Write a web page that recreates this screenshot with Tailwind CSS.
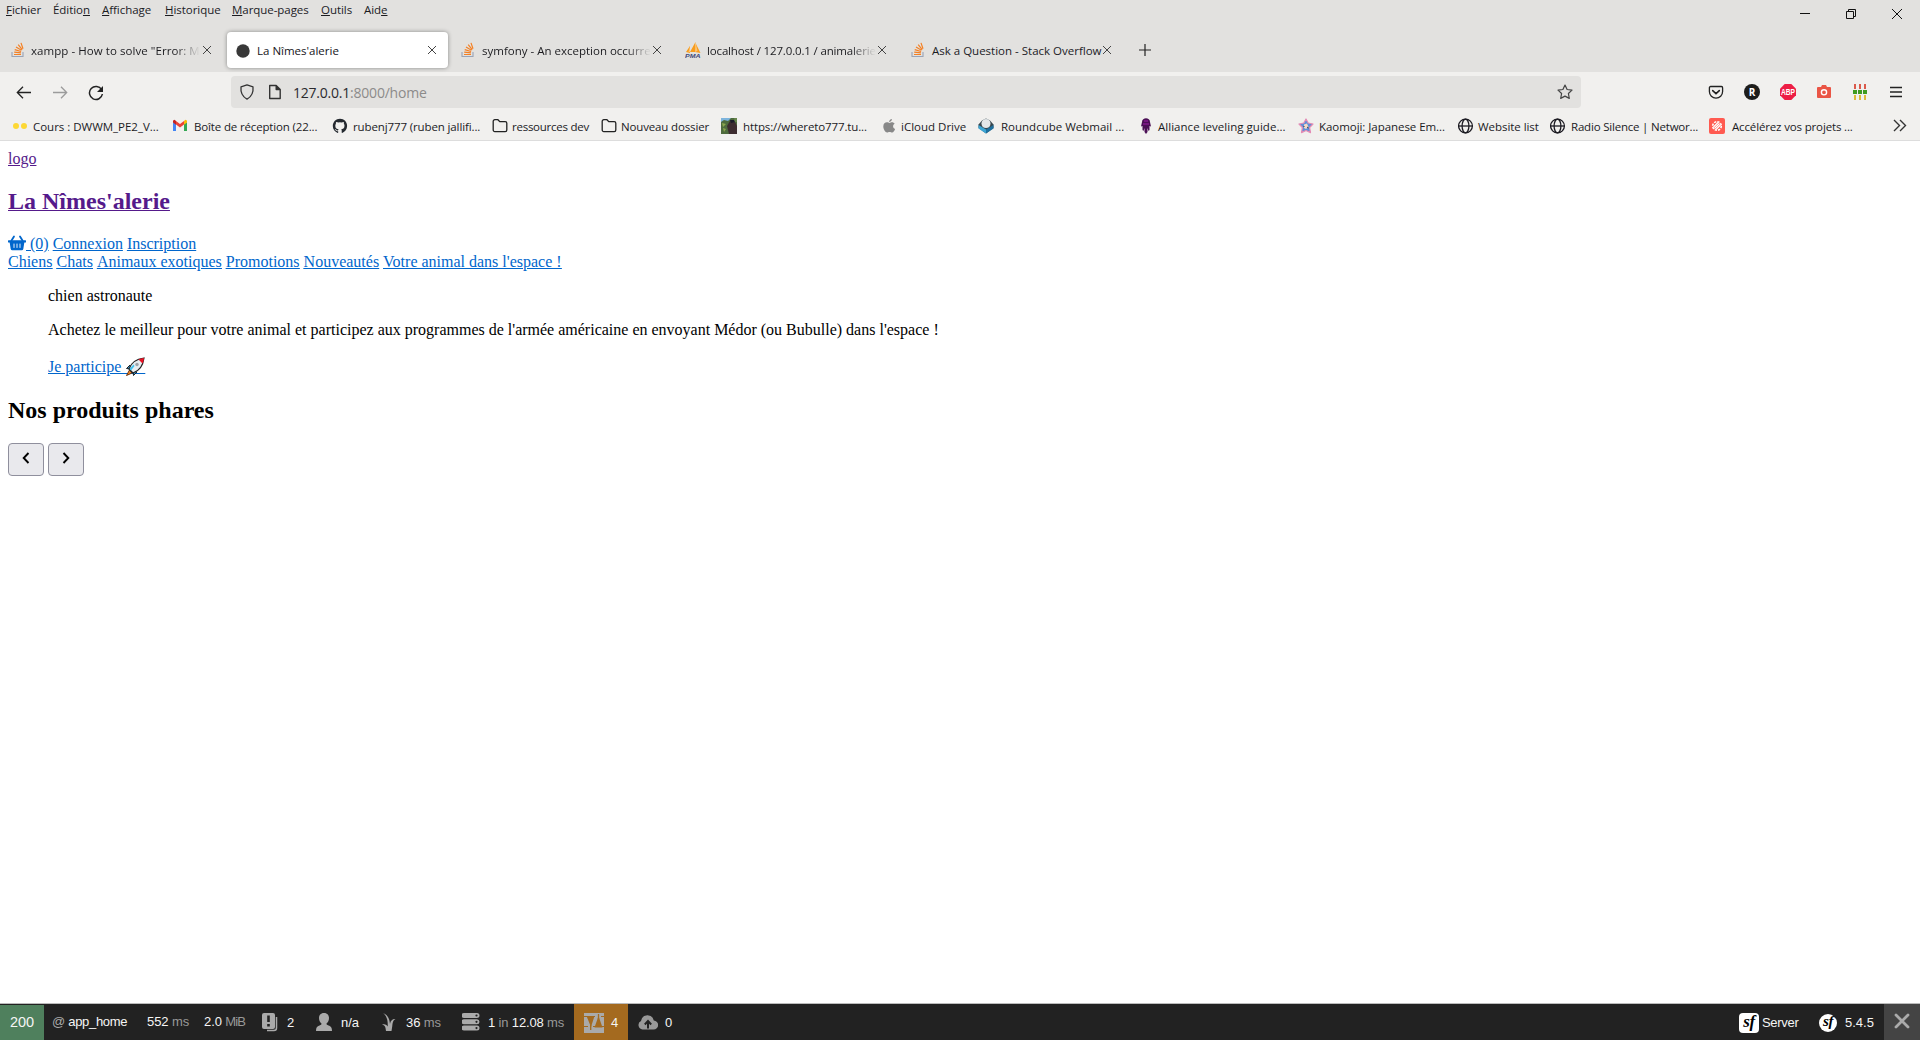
<!DOCTYPE html>
<html lang="fr">
  <head>
    <meta charset="UTF-8" />
    <meta name="viewport" content="width=device-width, initial-scale=1.0" />
    <script src="https://cdn.jsdelivr.net/npm/@tailwindcss/browser@4"></script>
    <title>La Nîmes'alerie</title>
  </head>
  <body class="bg-white h-[1040px] flex flex-col overflow-hidden">
    <!-- shared icons -->
    <svg class="hidden">
      <symbol id="so" viewBox="0 0 16 16">
        <path d="M2 10v4.500h11V10" fill="none" stroke="#9aa3b5" stroke-width="1.1" />
        <path d="M4 12.500h7M4.200 10.200l6.800.7M4.700 7.700l6.400 1.800M6 5l5.500 3.300M8.200 2.700l4 4.900M11 .9l2 5.900" stroke="#f48024" stroke-width="1.2" />
      </symbol>
      <symbol id="close" viewBox="0 0 10 10">
        <path d="M1 1l8 8M9 1l-8 8" stroke="#444" stroke-width="1" />
      </symbol>
      <symbol id="folder" viewBox="0 0 16 16">
        <path d="M1.2 12V3.3a1.6 1.6 0 0 1 1.6-1.6h3.1l1.9 2h5.4a1.6 1.6 0 0 1 1.6 1.6V12a1.6 1.6 0 0 1-1.6 1.6H2.8A1.6 1.6 0 0 1 1.2 12z" fill="none" stroke="#222" stroke-width="1.3" />
      </symbol>
      <symbol id="globe" viewBox="0 0 16 16">
        <g fill="none" stroke="#1c1b22" stroke-width="1.3">
          <circle cx="7.500" cy="8" r="6.9" />
          <ellipse cx="7.500" cy="8" rx="3.4" ry="6.9" />
          <path d="M.7 8h13.6" />
        </g>
      </symbol>
    </svg>

    <header class="font-['Open_Sans',sans-serif] text-[11.5px] text-[#1b1b1f] shrink-0">
      <div class="h-[72px] bg-[#e2e1df]">
        <!-- menu bar -->
        <div class="h-7 flex justify-between">
          <nav class="flex pl-1.5 leading-[20px] whitespace-nowrap tracking-[-0.05px]">
            <span class="w-[47px]"><u>F</u>ichier</span>
            <span class="w-[49px]">Éditio<u>n</u></span>
            <span class="w-[63px]"><u>A</u>ffichage</span>
            <span class="w-[67px]"><u>H</u>istorique</span>
            <span class="w-[89px]"><u>M</u>arque-pages</span>
            <span class="w-[43px]"><u>O</u>utils</span>
            <span>Aid<u>e</u></span>
          </nav>
          <div class="flex w-[138px] h-7 items-center">
            <svg class="w-[46px] h-7" viewBox="0 0 46 28"><path d="M18 13.5h10" stroke="#111" /></svg>
            <svg class="w-[46px] h-7" viewBox="0 0 46 28"><path d="M18.500 11.500h7v7h-7zM20.500 11.500v-2h7v7h-2" fill="none" stroke="#111" /></svg>
            <svg class="w-[46px] h-7" viewBox="0 0 46 28"><path d="M18 9l10 10M28 9L18 19" stroke="#111" /></svg>
          </div>
        </div>
        <!-- tabs -->
        <div class="h-11 flex items-center pl-0.5 whitespace-nowrap [&_span]:pt-[2px]">
          <div class="w-[225px] h-9 flex items-center pl-[8px]">
            <svg class="w-4 h-4"><use href="#so" /></svg>
            <span class="w-[169px] ml-[5px] overflow-hidden mask-r-from-85% mask-r-to-100% tracking-[0.06px]">xampp - How to solve "Error: My</span>
            <svg class="w-[10px] h-[10px] ml-[2px]"><use href="#close" /></svg>
          </div>
          <div class="w-[221px] mr-1 h-9 flex items-center pl-[9px] bg-white rounded shadow-[0_0_4px_rgba(0,0,0,0.4)]">
            <svg class="w-[14px] h-[14px] mt-0.5" viewBox="0 0 14 14"><circle cx="7" cy="7" r="6.700" fill="#383838" /></svg>
            <span class="w-[170px] ml-[7px] text-[#15141a]">La Nîmes'alerie</span>
            <svg class="w-[10px] h-[10px]"><use href="#close" /></svg>
          </div>
          <div class="w-[225px] h-9 flex items-center pl-[8px]">
            <svg class="w-4 h-4"><use href="#so" /></svg>
            <span class="w-[169px] ml-[6px] overflow-hidden mask-r-from-85% mask-r-to-100%">symfony - An exception occurred</span>
            <svg class="w-[10px] h-[10px] ml-[1px]"><use href="#close" /></svg>
          </div>
          <div class="w-[225px] h-9 flex items-center pl-[8px]">
            <svg class="w-4 h-4" viewBox="0 0 16 16">
              <path d="M1 10L5 4v7zM5 10l5.500-10v10zM10 10l1-8 4.500 9z" fill="#f89c1c" />
              <path d="M3.500 10L5 4v6zM10 10l.5-10 2 9z" fill="#fbc476" />
              <text x="0" y="15.500" font-size="6" font-weight="900" font-style="italic" font-family="Liberation Sans" textLength="15.500" lengthAdjust="spacingAndGlyphs" fill="#444a78">PMA</text>
            </svg>
            <span class="w-[169px] ml-[6px] overflow-hidden mask-r-from-85% mask-r-to-100% tracking-[-0.15px]">localhost / 127.0.0.1 / animalerie |</span>
            <svg class="w-[10px] h-[10px] ml-[1px]"><use href="#close" /></svg>
          </div>
          <div class="w-[225px] h-9 flex items-center pl-[8px]">
            <svg class="w-4 h-4"><use href="#so" /></svg>
            <span class="w-[169px] ml-[6px]">Ask a Question - Stack Overflow</span>
            <svg class="w-[10px] h-[10px] ml-[1px]"><use href="#close" /></svg>
          </div>
          <svg class="w-3 h-3 ml-[12px]" viewBox="0 0 12 12"><path d="M6 0v12M0 6h12" stroke="#222" stroke-width="1.2" /></svg>
        </div>
      </div>

      <div class="h-[69px] bg-[#f1f0ee] border-b border-[#dddddd]">
        <!-- address bar -->
        <div class="h-[40px] flex items-center">
          <div class="w-[231px] flex items-center pl-4 gap-5 text-[#1b1b1f]">
            <svg class="w-4 h-4" viewBox="0 0 16 16"><path d="M15 8.500H1.500M7 2.700L1.300 8.500 7 14.200" fill="none" stroke="#222" stroke-width="1.3" /></svg>
            <svg class="w-4 h-4" viewBox="0 0 16 16"><path d="M1 8.500h13.500M9 2.700l5.700 5.800L9 14.200" fill="none" stroke="#9b9b9b" stroke-width="1.3" /></svg>
            <svg class="w-4 h-4 mt-px" viewBox="0 0 16 16"><path d="M13.600 4.700A6.500 6.500 0 1 0 14.400 9" fill="none" stroke="#222" stroke-width="1.500" /><path d="M15 1v6H9z" fill="#222" /></svg>
          </div>
          <div class="w-[1350px] h-8 rounded bg-[#e2e1df] flex items-center pl-2">
            <svg class="w-4 h-4" viewBox="0 0 16 16"><path d="M8 .9l6 2c.5 5-1 9.600-6 12.200C3 12.500 1.500 7.900 2 2.900z" fill="none" stroke="#333" stroke-width="1.3" stroke-linejoin="round" /></svg>
            <svg class="w-4 h-4 ml-3" viewBox="0 0 16 16"><path d="M2.700 1.500h6.500l4 4v9H2.700zM9.200 1.500v4h4" fill="none" stroke="#333" stroke-width="1.4" stroke-linejoin="round" /><path d="M9 1.500l4.500 4.500H9z" fill="#333" /></svg>
            <span class="ml-[10px] w-[1264px] text-[14px] tracking-[-0.22px] text-[#8c8b8a] leading-8 pt-0.5"><span class="text-[#2a2a2e]">127.0.0.1</span>:8000/home</span>
            <svg class="w-4 h-4" viewBox="0 0 16 16"><path d="M8 1l2.100 4.500 4.900.6-3.600 3.400.9 4.900L8 12.100l-4.300 2.300.9-4.900L1 6.100l4.900-.6z" fill="none" stroke="#444" stroke-width="1.2" stroke-linejoin="round" /></svg>
          </div>
          <div class="flex items-center gap-5 pl-[127px]">
            <svg class="w-4 h-4" viewBox="0 0 16 16"><path d="M2.600 2.500h10.800a1.200 1.200 0 0 1 1.200 1.200V7.500a6.600 6.600 0 0 1-13.200 0V3.700a1.200 1.200 0 0 1 1.200-1.200z" fill="none" stroke="#222" stroke-width="1.3" /><path d="M4.700 6.600L8 9.700l3.300-3.100" fill="none" stroke="#222" stroke-width="1.6" stroke-linecap="round" /></svg>
            <span class="w-4 h-4 rounded-full bg-[#1d1d1b] text-white text-[10px] font-bold leading-4 text-center">R</span>
            <svg class="w-4 h-4" viewBox="0 0 16 16"><path d="M4.700 0h6.600L16 4.700v6.600L11.300 16H4.700L0 11.300V4.700z" fill="#ed1e45" /><text x="1" y="11" font-size="8.500" font-weight="800" font-family="Liberation Sans" textLength="14" lengthAdjust="spacingAndGlyphs" fill="#fff">ABP</text></svg>
            <svg class="w-4 h-4" viewBox="0 0 16 16"><path d="M2 3h3l1-2h4l1 2h3a1 1 0 0 1 1 1v9a1 1 0 0 1-1 1H2a1 1 0 0 1-1-1V4a1 1 0 0 1 1-1z" fill="#ea5545" /><circle cx="8" cy="8.300" r="2.600" fill="none" stroke="#fff" stroke-width="1.400" /></svg>
            <svg class="w-4 h-4" viewBox="0 0 16 16"><path d="M3 0v5M8 0v5M13 0v5" stroke="#d94a3a" stroke-width="1.800" /><path d="M3 11v5M8 11v5M13 11v5" stroke="#dbb626" stroke-width="1.800" /><path d="M1 8h4M6 8h4M11 8h4" stroke="#3f9b21" stroke-width="4" /></svg>
            <svg class="w-4 h-4" viewBox="0 0 16 16"><path d="M2 3.500h12M2 8h12M2 12.500h12" stroke="#222" stroke-width="1.400" /></svg>
          </div>
        </div>
        <!-- bookmarks -->
        <div class="h-7 flex items-center pl-3 whitespace-nowrap [&_svg]:w-4 [&_svg]:h-4 [&_svg]:shrink-0 [&_span]:pt-[2px]">
          <div class="w-[160px] flex items-center gap-[5px]">
            <svg viewBox="0 0 16 16"><circle cx="4" cy="8" r="3" fill="#fdd835" /><circle cx="12" cy="8" r="3" fill="#fdd835" /></svg>
            <span class="tracking-[-0.02px]">Cours : DWWM_PE2_V...</span>
          </div>
          <div class="w-[160px] flex items-center gap-[6px]">
            <svg viewBox="0 0 16 16"><path d="M1 13V4l3 2v7z" fill="#4285f4" /><path d="M12 13V6l3-2v9z" fill="#34a853" /><path d="M4 6.500V3l4 3 4-3v3.500L8 9.500z" fill="#ea4335" /><path d="M1 4.500V3a1.300 1.300 0 0 1 2.200-.8L4 3v3.700z" fill="#c5221f" /><path d="M12 3l.8-.8A1.300 1.300 0 0 1 15 3v1.500l-3 2.200z" fill="#fbbc04" /></svg>
            <span class="tracking-[-0.15px]">Boîte de réception (22...</span>
          </div>
          <div class="w-[160px] flex items-center gap-[5px]">
            <svg viewBox="0 0 16 16"><path fill="#24292f" d="M8 .8C3.900.8.800 4 .800 8c0 3.200 2 5.900 4.900 6.900.4.100.5-.2.5-.4v-1.300c-2 .4-2.500-.9-2.500-.9-.3-.8-.8-1-.8-1-.7-.4 0-.4 0-.4.7 0 1.100.7 1.100.7.700 1.100 1.700.8 2.100.6.1-.5.3-.8.5-1-1.600-.2-3.300-.8-3.300-3.500 0-.8.3-1.400.7-1.900-.1-.2-.3-.9.1-1.900 0 0 .6-.2 2 .7a7 7 0 0 1 3.600 0c1.400-.9 2-.7 2-.7.4 1 .2 1.700.1 1.900.5.5.7 1.100.7 1.900 0 2.700-1.700 3.300-3.300 3.500.3.200.5.700.5 1.300v2c0 .2.1.5.5.4 2.900-1 4.900-3.700 4.900-6.900C15.200 4 12.100.8 8 .8z" /></svg>
            <span class="tracking-[-0.12px]">rubenj777 (ruben jallifi...</span>
          </div>
          <div class="w-[109px] flex items-center gap-1">
            <svg><use href="#folder" /></svg><span class="tracking-[-0.25px]">ressources dev</span>
          </div>
          <div class="w-[120px] flex items-center gap-1">
            <svg><use href="#folder" /></svg><span class="tracking-[-0.15px]">Nouveau dossier</span>
          </div>
          <div class="w-[160px] flex items-center gap-[6px]">
            <svg viewBox="0 0 16 16"><path d="M0 0h16v16H0z" fill="#4e6b3d" /><path d="M0 0h10l-3 3-4-1-3 2z" fill="#7db4dc" /><path d="M1 5l4 1-3 3zM2 10l3 1-2 3z" fill="#8aa84e" /><path d="M6 8l3-5 5 1 2 4v8H8z" fill="#3d2d30" /><path d="M9 2h4l1 2-4 1z" fill="#191c28" /><path d="M13 0h3v4h-2z" fill="#67864d" /></svg>
            <span class="tracking-[-0.12px]">https://whereto777.tu...</span>
          </div>
          <div class="w-[97px] flex items-center gap-1">
            <svg viewBox="0 0 16 16"><path fill="#888" d="M10.900 1c.1 1.600-1.300 3-2.800 3C8 2.500 9.400 1.200 10.900 1zM11 4.300c1 0 2 .6 2.600 1.400-2.200 1.400-1.900 4.300.5 5.200-.5 1.400-1.700 3.600-3 3.600-1 0-1.300-.6-2.500-.6s-1.600.6-2.500.6C4.300 14.500 2.300 11 2.300 8.500c0-2.800 1.800-4.200 3.600-4.200 1.200 0 2 .7 2.700.7.600 0 1.300-.7 2.400-.7z" /></svg>
            <span>iCloud Drive</span>
          </div>
          <div class="w-[160px] flex items-center gap-[7px]">
            <svg viewBox="0 0 16 16"><path d="M.5 6.500L4 2.500 8 .5l4 2 3.500 4v3.500L8 15.500.5 10z" fill="#37474f" /><path d="M.5 7L8 11.500v4L.5 10.500z" fill="#3da5d4" /><path d="M15.500 7L8 11.500v4l7.500-5z" fill="#1d6f9e" /><path d="M3.500 5.500C3.500 2.500 5.500 1 8 1s4.500 1.500 4.500 4.500S10.500 10 8 10 3.500 8.500 3.500 5.500z" fill="#e3e6e8" /></svg>
            <span>Roundcube Webmail ...</span>
          </div>
          <div class="w-[160px] flex items-center gap-1">
            <svg viewBox="0 0 16 16"><path d="M4 4c0-5 8-5 8 0l1 4.500-1.500-.5v4l-1 1-1-3v4l-1.500 2-1.500-2v-4l-1 3-1-1V8l-1.500.5z" fill="#4b0f55" /><path d="M5 6h6M6 3h4" stroke="#a01fa8" /></svg>
            <span class="tracking-[0.03px]">Alliance leveling guide...</span>
          </div>
          <div class="w-[160px] flex items-center gap-[5px]">
            <svg viewBox="0 0 16 16"><path d="M8 1l2.200 4 4.800 1-3.400 3.500.9 5.100L8 12.500l-4.500 2.100.9-5.100L1 6l4.800-1z" fill="#5f8fd8" stroke="#e58bb4" stroke-width="1.200" stroke-linejoin="round" /><path d="M6 6.500l3-1 1.500 3.500L8 11l-2-1z" fill="#f2d9c8" /><path d="M9 9l1.500 1M5.500 8l1 1" stroke="#344" /></svg>
            <span class="tracking-[-0.05px]">Kaomoji: Japanese Em...</span>
          </div>
          <div class="w-[92px] flex items-center gap-1">
            <svg><use href="#globe" /></svg><span class="tracking-[-0.05px]">Website list</span>
          </div>
          <div class="w-[159px] flex items-center gap-[5px]">
            <svg><use href="#globe" /></svg><span class="tracking-[-0.2px]">Radio Silence | Networ...</span>
          </div>
          <div class="w-[183px] flex items-center gap-[7px]">
            <svg viewBox="0 0 16 16"><rect width="16" height="16" rx="2" fill="#ff5a50" /><circle cx="8" cy="8" r="4.300" fill="none" stroke="#fff" stroke-width="1.600" stroke-dasharray="2.200 1.150" /><path d="M4.500 9L9 4.500M5.500 10.500l5-5M7 11.500L11.500 7" stroke="#fff" stroke-width="1.200" /></svg>
            <span class="tracking-[-0.15px]">Accélérez vos projets ...</span>
          </div>
          <svg viewBox="0 0 16 16"><path d="M2 2l5.500 5.500L2 13M8 2l5.500 5.500L8 13" fill="none" stroke="#333" stroke-width="1.400" /></svg>
        </div>
      </div>
    </header>

    <main class="grow px-2 pt-[9px] font-['Liberation_Serif',serif] text-base leading-[18px] text-black">
      <a href="#" class="block text-[#551a8b] underline">logo</a>
      <h2 class="my-5 text-2xl leading-[27px] font-bold"><a href="#" class="text-[#551a8b] underline decoration-1">La Nîmes'alerie</a></h2>
      <div class="flex gap-1 text-[#0066cc]">
        <a href="#" class="flex">
          <svg class="w-[18px] h-4" viewBox="0 0 18 16"><path d="M6 1.500L3.500 5.500M12 1.500l2.500 4" stroke="#06c" stroke-width="1.800" stroke-linecap="round" /><path d="M.8 5.200h16.400a.9.900 0 0 1 0 2.300H.8a.9.900 0 0 1 0-2.300z" fill="#06c" /><path d="M1.600 7h14.800l-1.100 7a1.600 1.600 0 0 1-1.600 1.300H4.300A1.600 1.600 0 0 1 2.700 14z" fill="#06c" /><path d="M6 9v3.500M9 9v3.500M12 9v3.500" stroke="#fff" stroke-width=".9" stroke-linecap="round" /></svg>
          <span class="underline whitespace-pre"> (0)</span>
        </a>
        <a href="#" class="underline">Connexion</a>
        <a href="#" class="underline">Inscription</a>
      </div>
      <nav class="flex gap-1 text-[#0066cc] underline">
        <a href="#">Chiens</a>
        <a href="#">Chats</a>
        <a href="#">Animaux exotiques</a>
        <a href="#">Promotions</a>
        <a href="#">Nouveautés</a>
        <a href="#">Votre animal dans l'espace !</a>
      </nav>
      <figure class="mx-10 my-4">
        <p>chien astronaute</p>
        <p class="my-4">Achetez le meilleur pour votre animal et participez aux programmes de l'armée américaine en envoyant Médor (ou Bubulle) dans l'espace !</p>
        <a href="#" class="flex h-[22px] pt-[3px] text-[#0066cc]">
          <span class="underline">Je participe&nbsp;&nbsp;&nbsp;&nbsp;&nbsp;&nbsp;</span>
          <!-- rocket, drawn over the end of the underline -->
          <svg class="w-5 h-5 -ml-[20px] -mt-px" viewBox="0 0 20 20">
            <path d="M5 8L1.500 11.500 6 12zM12 15l-3.500 3.500L8 14z" fill="#2b93d1" stroke="#222" />
            <path d="M4.500 13L1.500 18.500 7 16z" fill="#f08a24" stroke="#6b3311" />
            <path d="M4 12C6 6 11 2 19 1c-1 8-5 13-11 15z" fill="#e8edf1" stroke="#222" stroke-width="1.200" />
            <path d="M13.500 2.500C15 1.700 17 1.200 19 1c-.2 2-.6 4-1.500 5.500z" fill="#e81224" />
            <path d="M4.500 12l4-4.500 1 1.500-3.500 4.500z" fill="#3ec1ee" />
            <circle cx="12" cy="7.500" r="1.700" fill="#9da3a9" />
          </svg>
        </a>
      </figure>
      <h2 class="mt-5 text-2xl leading-[27px] font-bold">Nos produits phares</h2>
      <div class="flex gap-1 mt-[19px]">
        <button class="w-9 h-[33px] rounded border border-[#8f8f9d] bg-[#e9e9ed] flex justify-center pt-[8px]">
          <svg class="w-3 h-3" viewBox="0 0 12 12"><path d="M8.500 1L3.700 6l4.800 5" fill="none" stroke="#000" stroke-width="1.900" /></svg>
        </button>
        <button class="w-9 h-[33px] rounded border border-[#8f8f9d] bg-[#e9e9ed] flex justify-center pt-[8px]">
          <svg class="w-3 h-3" viewBox="0 0 12 12"><path d="M3.500 1l4.800 5-4.800 5" fill="none" stroke="#000" stroke-width="1.900" /></svg>
        </button>
      </div>
    </main>

    <!-- symfony toolbar -->
    <footer class="shrink-0 h-[37px] border-t border-[#bbb] bg-[#222] flex justify-between font-['Liberation_Sans',sans-serif] text-[13px] leading-[35px] text-[#f5f5f5] whitespace-nowrap">
      <div class="flex">
        <div class="w-11 mt-px bg-[#4f805d] text-center text-[14.500px]">200</div>
        <div class="w-[95px] pl-2 tracking-[-0.3px]"><span class="text-[#aaa]">@</span> app_home</div>
        <div class="w-[57px] pl-2 tracking-[-0.1px]">552 <span class="text-[#999]">ms</span></div>
        <div class="w-[56px] pl-2 tracking-[-0.1px]">2.0 <span class="text-[#999] tracking-[-0.9px]">MiB</span></div>
        <div class="w-[55px] pl-[10px] flex items-center">
          <svg class="w-4 h-5" viewBox="0 0 16 20"><path d="M5 18.500h7a2.500 2.500 0 0 0 2.500-2.500V5" fill="none" stroke="#aaa" stroke-width="1.500" /><rect y="1" width="13" height="16" rx="2" fill="#aaa" /><path d="M6.500 3.500v6.500M6.500 12v2.500" stroke="#222" stroke-width="2.600" /></svg>
          <span class="ml-[9px]">2</span>
        </div>
        <div class="w-[65px] pl-[9px] flex items-center">
          <svg class="w-4 h-[18px]" viewBox="0 0 16 18"><path d="M8 0c3.500 0 5 2.500 5 5 0 2.500-1 4.500-2.500 5.500 0 1 .5 1.500 2 2 2.500.8 3.500 2 3.500 5.500H0c0-3.500 1-4.700 3.500-5.500 1.500-.5 2-1 2-2C4 9.500 3 7.500 3 5c0-2.500 1.500-5 5-5z" fill="#aaa" /></svg>
          <span class="ml-[9px]">n/a</span>
        </div>
        <div class="w-[79px] pl-[9px] flex items-center">
          <svg class="w-4 h-[18px]" viewBox="0 0 16 18"><path d="M2 0c5 2 6.500 6 7 11 .5-3 2-5 5.500-5-2.500 1-3 4-3.200 7l-.8 5H5l-.5-3c-.3-2-1.500-3-3.500-3.500 3-1 5 .5 5.700 2C7 8 6 3 2 0z" fill="#aaa" /></svg>
          <span class="ml-[9px] tracking-[-0.1px]">36 <span class="text-[#999]">ms</span></span>
        </div>
        <div class="w-[123px] pl-[11px] flex items-center">
          <svg class="w-[18px] h-[18px]" viewBox="0 0 18 18"><path d="M2 0h13a2.500 2.500 0 0 1 0 5H2a2.500 2.500 0 0 1 0-5zM2 6.300h13a2.500 2.500 0 0 1 0 5H2a2.500 2.500 0 0 1 0-5zM2 12.600h13a2.500 2.500 0 0 1 0 5H2a2.500 2.500 0 0 1 0-5z" fill="#aaa" /><g fill="#222"><circle cx="14.500" cy="2.500" r="1.100" /><circle cx="14.500" cy="8.800" r="1.100" /><circle cx="14.500" cy="15.100" r="1.100" /></g></svg>
          <span class="ml-[8px] tracking-[-0.15px]">1 <span class="text-[#999]">in</span> 12.08 <span class="text-[#999]">ms</span></span>
        </div>
        <div class="w-[54px] pl-[10px] bg-[#a46a1f] flex items-center">
          <svg class="w-5 h-5 mt-0.5" viewBox="0 0 20 20"><path d="M0 0h20v20H0z" fill="#aaa" /><path d="M0 3.500h11M9 13.500h11M0 13.500h4M17 3.500h3" stroke="#a46a1f" stroke-width="1" /><path d="M2.500 3h8L7 14zM10.500 14.500L14.500 3l4 11.500z" fill="#a46a1f" /><path d="M6.700 12v5M14.500 1v5" stroke="#a46a1f" stroke-width="1.300" /></svg>
          <span class="ml-[7px]">4</span>
        </div>
        <div class="pl-[10px] flex items-center">
          <svg class="w-5 h-4 mt-px" viewBox="0 0 20 16"><path d="M4.500 14.500A4.500 4.500 0 0 1 3 6a6.500 6.500 0 0 1 12.800-.5 4.500 4.500 0 0 1-.3 9z" fill="#999" /><path d="M10 13.500V7M6.800 9.500L10 6l3.200 3.500" fill="none" stroke="#222" stroke-width="2" /></svg>
          <span class="ml-[7px]">0</span>
        </div>
      </div>
      <div class="flex">
        <div class="w-[80px] flex items-center">
          <span class="w-5 h-5 mt-0.5 bg-white rounded-sm text-black text-[17px] leading-[17px] text-center italic font-['Liberation_Serif',serif] font-bold tracking-[-0.5px]">sf</span>
          <span class="ml-[3px] tracking-[-0.3px]">Server</span>
        </div>
        <div class="w-[65px] flex items-center">
          <span class="w-[18px] h-[18px] mt-0.5 bg-white rounded-full text-black text-[15px] leading-[15px] text-center italic font-['Liberation_Serif',serif] font-bold tracking-[-0.5px]">sf</span>
          <span class="ml-[8px]">5.4.5</span>
        </div>
        <div class="w-9 bg-[#444] flex items-center justify-center">
          <svg class="w-4 h-4 -mt-0.5" viewBox="0 0 16 16"><path d="M2 2l12 12M14 2L2 14" stroke="#aaa" stroke-width="2.800" stroke-linecap="round" /></svg>
        </div>
      </div>
    </footer>
  </body>
</html>
